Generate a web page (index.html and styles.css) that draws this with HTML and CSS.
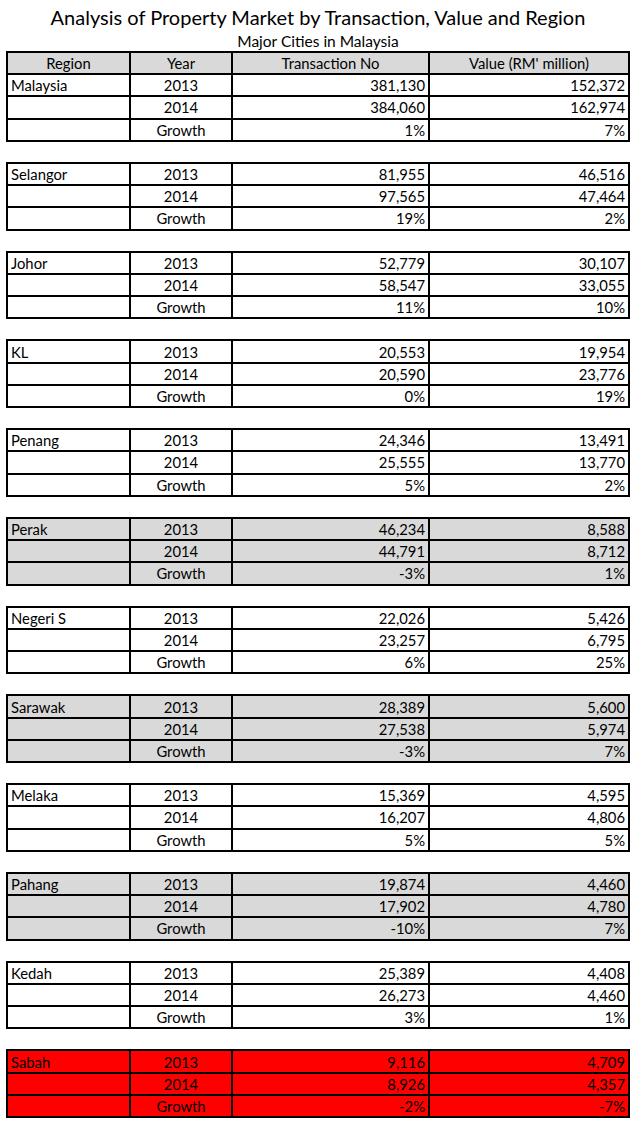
FILE: index.html
```html
<!DOCTYPE html>
<html>
<head>
<meta charset="utf-8">
<link rel="stylesheet" href="styles.css">
</head>
<body>
<div class="sheet">
  <div class="title">Analysis of Property Market by Transaction, Value and Region</div>
  <div class="subtitle">Major Cities in Malaysia</div>
  <table class="grid">
    <colgroup><col class="c1"><col class="c2"><col class="c3"><col class="c4"></colgroup>
    <tbody>
      <tr class="head"><td>Region</td><td>Year</td><td>Transaction No</td><td>Value (RM' million)</td></tr>

      <tr><td class="reg">Malaysia</td><td class="yr">2013</td><td class="num">381,130</td><td class="num">152,372</td></tr>
      <tr><td></td><td class="yr">2014</td><td class="num">384,060</td><td class="num">162,974</td></tr>
      <tr><td></td><td class="yr">Growth</td><td class="pct">1%</td><td class="pct">7%</td></tr>
      <tr class="gap"><td></td><td></td><td></td><td></td></tr>

      <tr><td class="reg">Selangor</td><td class="yr">2013</td><td class="num">81,955</td><td class="num">46,516</td></tr>
      <tr><td></td><td class="yr">2014</td><td class="num">97,565</td><td class="num">47,464</td></tr>
      <tr><td></td><td class="yr">Growth</td><td class="pct">19%</td><td class="pct">2%</td></tr>
      <tr class="gap"><td></td><td></td><td></td><td></td></tr>

      <tr><td class="reg">Johor</td><td class="yr">2013</td><td class="num">52,779</td><td class="num">30,107</td></tr>
      <tr><td></td><td class="yr">2014</td><td class="num">58,547</td><td class="num">33,055</td></tr>
      <tr><td></td><td class="yr">Growth</td><td class="pct">11%</td><td class="pct">10%</td></tr>
      <tr class="gap"><td></td><td></td><td></td><td></td></tr>

      <tr><td class="reg">KL</td><td class="yr">2013</td><td class="num">20,553</td><td class="num">19,954</td></tr>
      <tr><td></td><td class="yr">2014</td><td class="num">20,590</td><td class="num">23,776</td></tr>
      <tr><td></td><td class="yr">Growth</td><td class="pct">0%</td><td class="pct">19%</td></tr>
      <tr class="gap"><td></td><td></td><td></td><td></td></tr>

      <tr><td class="reg">Penang</td><td class="yr">2013</td><td class="num">24,346</td><td class="num">13,491</td></tr>
      <tr><td></td><td class="yr">2014</td><td class="num">25,555</td><td class="num">13,770</td></tr>
      <tr><td></td><td class="yr">Growth</td><td class="pct">5%</td><td class="pct">2%</td></tr>
      <tr class="gap"><td></td><td></td><td></td><td></td></tr>

      <tr class="grey"><td class="reg">Perak</td><td class="yr">2013</td><td class="num">46,234</td><td class="num">8,588</td></tr>
      <tr class="grey"><td></td><td class="yr">2014</td><td class="num">44,791</td><td class="num">8,712</td></tr>
      <tr class="grey"><td></td><td class="yr">Growth</td><td class="pct">-3%</td><td class="pct">1%</td></tr>
      <tr class="gap"><td></td><td></td><td></td><td></td></tr>

      <tr><td class="reg">Negeri S</td><td class="yr">2013</td><td class="num">22,026</td><td class="num">5,426</td></tr>
      <tr><td></td><td class="yr">2014</td><td class="num">23,257</td><td class="num">6,795</td></tr>
      <tr><td></td><td class="yr">Growth</td><td class="pct">6%</td><td class="pct">25%</td></tr>
      <tr class="gap"><td></td><td></td><td></td><td></td></tr>

      <tr class="grey"><td class="reg">Sarawak</td><td class="yr">2013</td><td class="num">28,389</td><td class="num">5,600</td></tr>
      <tr class="grey"><td></td><td class="yr">2014</td><td class="num">27,538</td><td class="num">5,974</td></tr>
      <tr class="grey"><td></td><td class="yr">Growth</td><td class="pct">-3%</td><td class="pct">7%</td></tr>
      <tr class="gap"><td></td><td></td><td></td><td></td></tr>

      <tr><td class="reg">Melaka</td><td class="yr">2013</td><td class="num">15,369</td><td class="num">4,595</td></tr>
      <tr><td></td><td class="yr">2014</td><td class="num">16,207</td><td class="num">4,806</td></tr>
      <tr><td></td><td class="yr">Growth</td><td class="pct">5%</td><td class="pct">5%</td></tr>
      <tr class="gap"><td></td><td></td><td></td><td></td></tr>

      <tr class="grey"><td class="reg">Pahang</td><td class="yr">2013</td><td class="num">19,874</td><td class="num">4,460</td></tr>
      <tr class="grey"><td></td><td class="yr">2014</td><td class="num">17,902</td><td class="num">4,780</td></tr>
      <tr class="grey"><td></td><td class="yr">Growth</td><td class="pct">-10%</td><td class="pct">7%</td></tr>
      <tr class="gap"><td></td><td></td><td></td><td></td></tr>

      <tr><td class="reg">Kedah</td><td class="yr">2013</td><td class="num">25,389</td><td class="num">4,408</td></tr>
      <tr><td></td><td class="yr">2014</td><td class="num">26,273</td><td class="num">4,460</td></tr>
      <tr><td></td><td class="yr">Growth</td><td class="pct">3%</td><td class="pct">1%</td></tr>
      <tr class="gap"><td></td><td></td><td></td><td></td></tr>

      <tr class="red"><td class="reg">Sabah</td><td class="yr">2013</td><td class="num">9,116</td><td class="num">4,709</td></tr>
      <tr class="red"><td></td><td class="yr">2014</td><td class="num">8,926</td><td class="num">4,357</td></tr>
      <tr class="red"><td></td><td class="yr">Growth</td><td class="pct">-2%</td><td class="pct">-7%</td></tr>
    </tbody>
  </table>
</div>
</body>
</html>
```
FILE: styles.css
```css
html, body {
  margin: 0;
  padding: 0;
  background: #ffffff;
}

body {
  font-family: "Lato", "Liberation Sans", sans-serif;
  color: #000000;
}

.sheet {
  width: 624px;
  margin-left: 6px;
}

.title {
  height: 30px;
  line-height: 34px;
  font-size: 20px;
  text-align: center;
  white-space: nowrap;
}

.subtitle {
  height: 21px;
  line-height: 22px;
  font-size: 15.5px;
  text-align: center;
}

.grid {
  width: 624px;
  border-collapse: collapse;
  table-layout: fixed;
  font-size: 14.8px;
}

.c1 { width: 123px; }
.c2 { width: 102px; }
.c3 { width: 197px; }
.c4 { width: 200px; }

.grid tr {
  height: 22.19px;
}

.grid td {
  border: 2px solid #000000;
  padding: 0 3px;
  line-height: 18px;
  white-space: nowrap;
  overflow: hidden;
}

.grid tr.gap td {
  border-left: none;
  border-right: none;
}

.head td {
  background: #d9d9d9;
  text-align: center;
}

.grey td {
  background: #d9d9d9;
}

.red td {
  background: #ff0000;
}

.reg {
  text-align: left;
}

.yr {
  text-align: center;
}

.num {
  text-align: right;
  padding-right: 8px;
}

.pct {
  text-align: right;
  padding-right: 2px;
}
```
